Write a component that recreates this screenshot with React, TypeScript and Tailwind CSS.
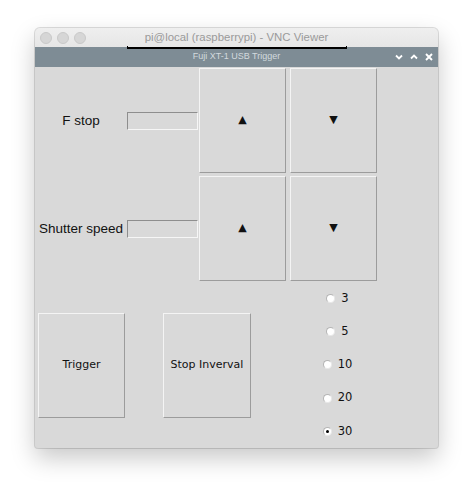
import React from "react";

const tk = { fontFamily: '"DejaVu Sans", sans-serif' };
const helv = { fontFamily: '"Liberation Sans", Arial, sans-serif' };

function TkButton({ children, className }: { children?: React.ReactNode; className: string }) {
  return (
    <div
      className={`flex shrink-0 items-center justify-center border border-t-[#f4f4f4] border-l-[#f4f4f4] border-b-[#9c9c9c] border-r-[#9c9c9c] bg-[#d9d9d9] text-[11px] text-[#111] ${className}`}
      style={tk}
    >
      {children}
    </div>
  );
}

function Row({ label }: { label: string }) {
  return (
    <div className="flex h-[105px] shrink-0 items-center">
      <div className="w-[92px] pt-[2px] text-center text-[13.5px] text-[#111]" style={helv}>
        {label}
      </div>
      <div className="h-[18px] w-[71px] border border-t-[#8e8e8e] border-l-[#8e8e8e] border-b-[#f6f6f6] border-r-[#f6f6f6] bg-[#d9d9d9]" />
      <TkButton className="ml-[1px] h-[105px] w-[87px]">▲</TkButton>
      <TkButton className="ml-[4px] h-[105px] w-[87px]">▼</TkButton>
    </div>
  );
}

function Radio({ label, checked }: { label: string; checked?: boolean }) {
  return (
    <div className="flex h-[33.2px] shrink-0 items-center justify-center gap-[6px]">
      <div className="flex h-[9px] w-[9px] items-center justify-center rounded-full border border-t-[#b4b4b4] border-l-[#b4b4b4] border-b-[#e8e8e8] border-r-[#e8e8e8] bg-white">
        {checked && <div className="h-[3px] w-[3px] rounded-full bg-black" />}
      </div>
      <span className="text-[11.5px] leading-none text-[#111]" style={tk}>
        {label}
      </span>
    </div>
  );
}

export default function App() {
  return (
    <div className="h-[492px] w-[474px] overflow-hidden bg-white pl-[35px] pt-[28px]">
      <div className="relative h-[420px] w-[403px] rounded-t-[5px] rounded-b-[3px] bg-[#d9d9d9] shadow-[0_0_0_1px_rgba(0,0,0,0.13),0_10px_24px_rgba(0,0,0,0.22)]">
        {/* mac title bar */}
        <div className="grid h-[19px] grid-cols-[1fr_auto_1fr] items-center rounded-t-[5px] bg-gradient-to-b from-[#efefef] to-[#e6e6e6]">
          <div className="flex gap-[5px] pl-[5px]">
            <div className="h-[12px] w-[12px] rounded-full border border-[#c9c9c9] bg-[#d6d6d6]" />
            <div className="h-[12px] w-[12px] rounded-full border border-[#c9c9c9] bg-[#d6d6d6]" />
            <div className="h-[12px] w-[12px] rounded-full border border-[#c9c9c9] bg-[#d6d6d6]" />
          </div>
          <div className="text-[11.4px] text-[#9a9a9a]" style={helv}>
            pi@local (raspberrypi) - VNC Viewer
          </div>
          <div />
        </div>
        {/* inner bar */}
        <div className="grid h-[20px] grid-cols-[1fr_auto_1fr] items-center bg-[#7e8c95]">
          <div />
          <div className="text-[9px] text-[#d3dade]" style={helv}>
            Fuji XT-1 USB Trigger
          </div>
          <div className="flex items-center justify-end gap-[7px] pr-[5px]">
            <svg width="8" height="8" viewBox="0 0 8 8">
              <polyline points="1,2.5 4,5.5 7,2.5" fill="none" stroke="white" strokeWidth="1.8" />
            </svg>
            <svg width="8" height="8" viewBox="0 0 8 8">
              <polyline points="1,5.5 4,2.5 7,5.5" fill="none" stroke="white" strokeWidth="1.8" />
            </svg>
            <svg width="8" height="8" viewBox="0 0 8 8">
              <path d="M1 1 L7 7 M7 1 L1 7" stroke="white" strokeWidth="1.9" />
            </svg>
          </div>
        </div>
        {/* overlay line */}
        <div className="absolute left-[92px] top-[18px] h-[3px] w-[220px] border-x border-b-2 border-black" />
        {/* content */}
        <div className="flex h-[381px] flex-col pt-[1px]">
          <Row label="F stop" />
          <div className="h-[3px] shrink-0" />
          <Row label="Shutter speed" />
          <div className="flex flex-1">
            <div className="flex w-[263px] items-center pl-[3px] pt-[1px]">
              <TkButton className="h-[105px] w-[87px]">Trigger</TkButton>
              <TkButton className="ml-[38px] h-[105px] w-[88px]">Stop Inverval</TkButton>
            </div>
            <div className="flex w-[79px] flex-col pt-[1px]">
              <Radio label="3" />
              <Radio label="5" />
              <Radio label="10" />
              <Radio label="20" />
              <Radio label="30" checked />
            </div>
          </div>
        </div>
      </div>
    </div>
  );
}
